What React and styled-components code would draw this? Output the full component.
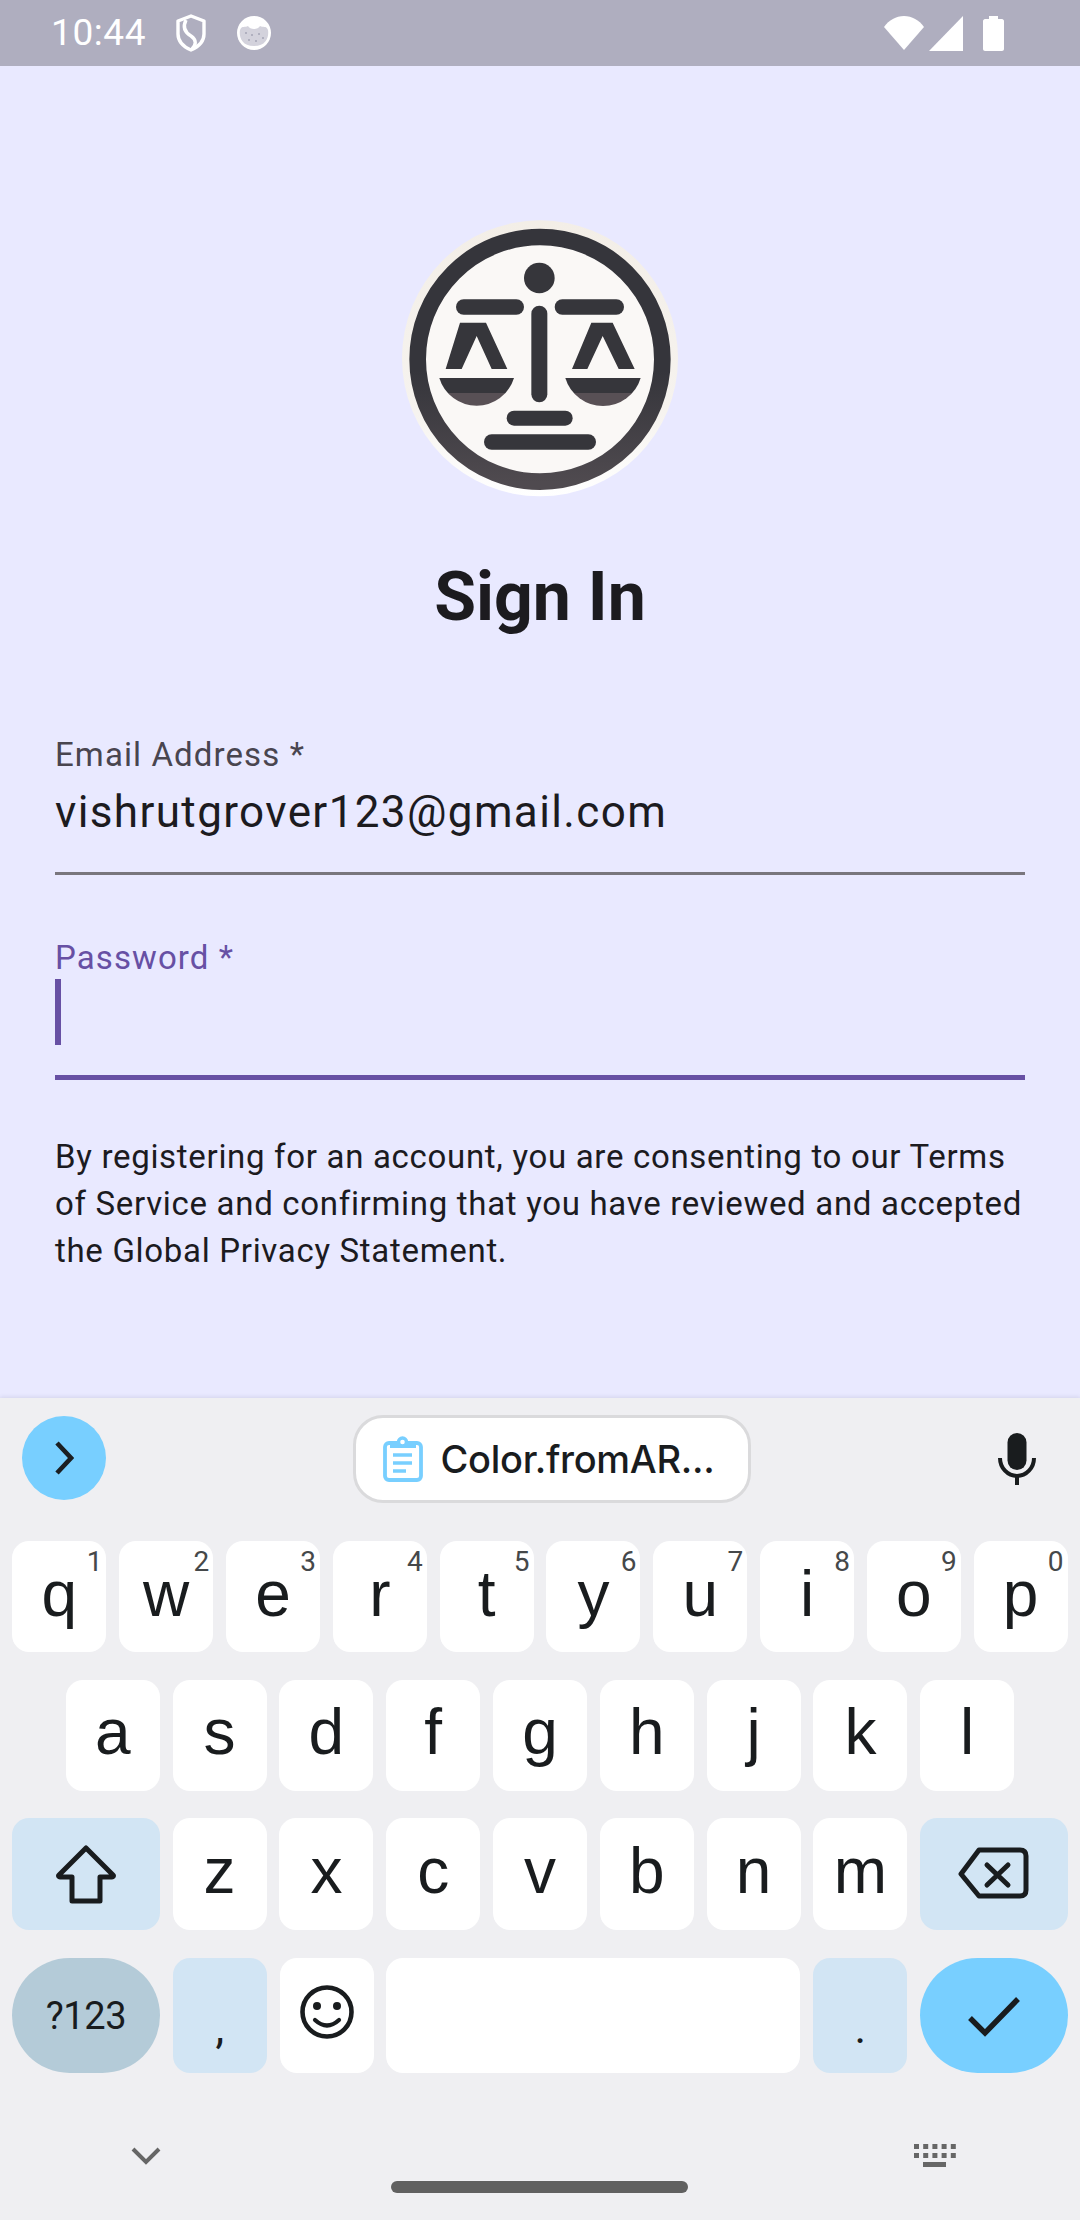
import React from 'react'
import styled, { createGlobalStyle } from 'styled-components'

const GlobalStyle = createGlobalStyle`
  html, body {
    margin: 0;
    padding: 0;
    background: #efeff2;
    font-family: Roboto, "Liberation Sans", sans-serif;
  }
`

const rows = [
  [['q', '1'], ['w', '2'], ['e', '3'], ['r', '4'], ['t', '5'], ['y', '6'], ['u', '7'], ['i', '8'], ['o', '9'], ['p', '0']],
  [['a'], ['s'], ['d'], ['f'], ['g'], ['h'], ['j'], ['k'], ['l']],
]
const lowerRow = ['z', 'x', 'c', 'v', 'b', 'n', 'm']

const Scales = () => (
  <LogoSvg viewBox="60 60 840 840">
    <defs>
      <linearGradient id="ring" x1="0" y1="0" x2="0" y2="1">
        <stop offset="0.55" stopColor="#35353b" />
        <stop offset="1" stopColor="#4f4a4f" />
      </linearGradient>
      <linearGradient id="rim" x1="0" y1="0" x2="0" y2="1">
        <stop offset="0" stopColor="#f3eee7" />
        <stop offset="0.7" stopColor="#f6f3ef" />
        <stop offset="1" stopColor="#ffffff" />
      </linearGradient>
      <linearGradient id="pan" x1="0" y1="0" x2="0" y2="1">
        <stop offset="0.53" stopColor="#36363b" />
        <stop offset="0.53" stopColor="#585055" />
      </linearGradient>
    </defs>
    <circle cx="480" cy="475" r="414" fill="url(#rim)" />
    <circle cx="480" cy="478" r="344" fill="#faf8f6" />
    <circle cx="480" cy="478" r="367" fill="none" stroke="url(#ring)" strokeWidth="50" />
    <g fill="#36363b">
      <circle cx="478" cy="234" r="46" />
      <rect x="228" y="298" width="204" height="46" rx="23" />
      <rect x="524" y="298" width="208" height="46" rx="23" />
      <rect x="454" y="317" width="48" height="290" rx="24" />
      <rect x="380" y="632" width="198" height="45" rx="22" />
      <rect x="312" y="703" width="336" height="46" rx="23" />
      <polygon points="240,368 318,368 382,507 335,507 290,408 245,507 197,507" />
      <polygon points="634,368 698,368 764,507 716,507 668,408 622,507 576,507" />
    </g>
    <path d="M178 534H402A117 117 0 0 1 178 534Z" fill="url(#pan)" />
    <path d="M556 534H782A118 118 0 0 1 556 534Z" fill="url(#pan)" />
  </LogoSvg>
)

const ShieldIcon = () => (
  <svg width="30" height="38" viewBox="0 0 30 38" fill="none" stroke="#fff" strokeWidth="3.4">
    <path d="M15 2L28 7V20C28 28 22 33 15 36C8 33 2 28 2 20V7Z" strokeLinejoin="round" />
    <path d="M10 6C6 14 10 19 15 22C21 26 20 31 16 35" />
  </svg>
)

const DebugIcon = () => (
  <svg width="36" height="34" viewBox="0 0 36 34">
    <circle cx="18" cy="17" r="17" fill="#fff" />
    <path d="M4 14C6 9 9 12 12 10C14 14 22 14 24 10C27 12 30 9 32 14C33 20 31 30 18 30C5 30 3 20 4 14Z" fill="#d3d2dc" />
    <g fill="#a5a4b6">
      <circle cx="10" cy="17" r="1" />
      <circle cx="16" cy="19" r="1" />
      <circle cx="23" cy="18" r="1" />
      <circle cx="27" cy="22" r="1" />
      <circle cx="13" cy="24" r="1" />
      <circle cx="20" cy="25" r="1" />
    </g>
  </svg>
)

const WifiIcon = () => (
  <svg width="40" height="34" viewBox="0 0 40 34">
    <path d="M0 11C5 4 12 0 20 0C28 0 35 4 40 11L20 34Z" fill="#fff" />
  </svg>
)

const SignalIcon = () => (
  <svg width="34" height="35" viewBox="0 0 34 35">
    <path d="M34 0V35H0Z" fill="#fff" />
  </svg>
)

const BatteryIcon = () => (
  <svg width="21" height="35" viewBox="0 0 21 35">
    <path d="M6 0H15V3H19C20 3 21 4 21 5V33C21 34 20 35 19 35H2C1 35 0 34 0 33V5C0 4 1 3 2 3H6Z" fill="#fff" />
  </svg>
)

const ChevronRight = () => (
  <svg width="20" height="34" viewBox="0 0 20 34" fill="none" stroke="#1b1f22" strokeWidth="4.6">
    <path d="M3 2L17 17L3 32" />
  </svg>
)

const ClipboardIcon = () => (
  <svg width="40" height="46" viewBox="0 0 40 46" fill="none" stroke="#78cfff">
    <rect x="2" y="7" width="36" height="37" rx="4" strokeWidth="3.8" />
    <path d="M8 7H32V11H8Z" fill="#78cfff" strokeWidth="2" />
    <circle cx="19.5" cy="6" r="4" fill="#fff" strokeWidth="3.4" />
    <path d="M10 19H29M10 27H29M10 35H23" strokeWidth="3.4" />
  </svg>
)

const MicIcon = () => (
  <svg width="40" height="52" viewBox="0 0 40 52" fill="none">
    <rect x="10.5" y="0" width="19" height="37" rx="9.5" fill="#191c1e" />
    <path d="M3 25A17 18 0 0 0 37 25M20 43V52" stroke="#191c1e" strokeWidth="4" />
  </svg>
)

const ShiftIcon = () => (
  <svg width="64" height="60" viewBox="0 0 64 60" fill="none" stroke="#191c1e" strokeWidth="5" strokeLinejoin="round">
    <path d="M32 4L59 31C60 32 59 33 58 33H46V57H18V33H6C5 33 4 32 5 31Z" />
  </svg>
)

const BackspaceIcon = () => (
  <svg width="72" height="58" viewBox="0 0 72 58" fill="none" stroke="#191c1e" strokeWidth="5" strokeLinecap="round" strokeLinejoin="round">
    <path d="M3 29L21 5H62C66 5 68 7 68 11V45C68 49 66 51 62 51H21Z" />
    <path d="M29 20L50 40M50 20L29 40" />
  </svg>
)

const SmileIcon = () => (
  <svg width="56" height="56" viewBox="0 0 56 56" fill="none" stroke="#191c1e">
    <circle cx="28" cy="28" r="24.5" strokeWidth="4.6" />
    <circle cx="18" cy="22" r="4" fill="#191c1e" stroke="none" />
    <circle cx="38" cy="22" r="4" fill="#191c1e" stroke="none" />
    <path d="M16 36Q28 47 40 36" strokeWidth="4.2" strokeLinecap="round" />
  </svg>
)

const CheckIcon = () => (
  <svg width="56" height="44" viewBox="0 0 56 44" fill="none" stroke="#191c1e" strokeWidth="5.4">
    <path d="M4 24L19 39L52 5" />
  </svg>
)

const CollapseIcon = () => (
  <svg width="30" height="18" viewBox="0 0 30 18" fill="none" stroke="#666" strokeWidth="4">
    <path d="M2 2L15 15L28 2" />
  </svg>
)

const KeyboardIcon = () => (
  <svg width="42" height="24" viewBox="0 0 42 24" fill="#666">
    {[0, 9.2, 18.4, 27.6, 36.8].map(x => (
      <g key={x}>
        <rect x={x} y="0" width="5" height="5" />
        <rect x={x} y="9" width="5" height="5" />
      </g>
    ))}
    <rect x="9" y="18" width="23" height="5" />
  </svg>
)

export default function App() {
  return (
    <Screen>
      <GlobalStyle />
      <StatusBar>
        <StatusLeft>
          <Clock>10:44</Clock>
          <ShieldIcon />
          <DebugIcon />
        </StatusLeft>
        <StatusRight>
          <WifiIcon />
          <SignalIcon />
          <BatteryIcon />
        </StatusRight>
      </StatusBar>

      <Main>
        <Scales />
        <Title>Sign In</Title>
        <Field>
          <Label>Email Address *</Label>
          <Value>vishrutgrover123@gmail.com</Value>
        </Field>
        <Field $focused>
          <Label $focused>Password *</Label>
          <Value $focused><Caret /></Value>
        </Field>
        <Notice>
          By registering for an account, you are consenting to our Terms of Service and confirming that you have reviewed and accepted the Global Privacy Statement.
        </Notice>
      </Main>

      <Keyboard>
        <Toolbar>
          <ExpandButton><ChevronRight /></ExpandButton>
          <ClipChip>
            <ClipboardIcon />
            <ClipText>Color.fromAR...</ClipText>
          </ClipChip>
          <MicIcon />
        </Toolbar>

        <KeyRows>
          {rows.map((row, i) => (
            <KeyRow key={i} $height={111}>
              {row.map(([letter, hint]) => (
                <Key key={letter}>
                  {letter}
                  {hint && <Hint>{hint}</Hint>}
                </Key>
              ))}
            </KeyRow>
          ))}
          <KeyRow $height={112}>
            <WideKey $mod><ShiftIcon /></WideKey>
            {lowerRow.map(letter => <Key key={letter}>{letter}</Key>)}
            <WideKey $mod><BackspaceIcon /></WideKey>
          </KeyRow>
          <KeyRow $height={115}>
            <PillKey $bg="#b4cbd8">?123</PillKey>
            <PunctKey>,</PunctKey>
            <Key><SmileIcon /></Key>
            <SpaceKey />
            <PunctKey>.</PunctKey>
            <PillKey $bg="#78cfff"><CheckIcon /></PillKey>
          </KeyRow>
        </KeyRows>

        <NavBar>
          <CollapseIcon />
          <KeyboardIcon />
        </NavBar>
        <HomeHandle />
      </Keyboard>
    </Screen>
  )
}

const Screen = styled.div`
  position: relative;
  width: 1080px;
  height: 2220px;
  display: flex;
  flex-direction: column;
  overflow: hidden;
`

const StatusBar = styled.div`
  height: 66px;
  flex: none;
  background: #afaebf;
  display: flex;
  align-items: center;
  justify-content: space-between;
  padding: 0 76px 0 51px;
`

const StatusLeft = styled.div`
  display: flex;
  align-items: center;
  gap: 30px;
`

const StatusRight = styled.div`
  display: flex;
  align-items: center;
  gap: 5px;

  svg:last-child {
    margin-left: 15px;
  }
`

const Clock = styled.span`
  font-size: 37px;
  color: #fff;
  line-height: 40px;
  letter-spacing: 0.6px;
`

const Main = styled.main`
  flex: 1;
  background: #e9e9ff;
  padding: 0 55px;
  display: flex;
  flex-direction: column;
  color: #1c1b1f;
`

const LogoSvg = styled.svg`
  width: 280px;
  height: 280px;
  flex: none;
  margin: 154px auto 0;
`

const Title = styled.h1`
  margin: 57px 0 98px;
  font-size: 68px;
  line-height: 80px;
  font-weight: 700;
  text-align: center;
`

const Field = styled.div`
  border-bottom: ${p => (p.$focused ? '5.5px solid #6750a4' : '3px solid #79767d')};
  padding-bottom: ${p => (p.$focused ? '30px' : '32px')};
  margin-bottom: ${p => (p.$focused ? '54px' : '63px')};
`

const Label = styled.div`
  font-size: 33px;
  line-height: 40px;
  letter-spacing: 1.1px;
  color: ${p => (p.$focused ? '#6750a4' : '#49454f')};
`

const Value = styled.div`
  font-size: 44px;
  line-height: 56px;
  height: ${p => (p.$focused ? '66px' : '56px')};
  margin-top: ${p => (p.$focused ? '1px' : '9px')};
  letter-spacing: 1.375px;
`

const Caret = styled.div`
  width: 5.5px;
  height: 66px;
  background: #6750a4;
`

const Notice = styled.p`
  margin: 0;
  font-size: 33px;
  line-height: 46.75px;
  letter-spacing: 0.69px;
`

const Keyboard = styled.div`
  position: relative;
  height: 822px;
  flex: none;
  background: #efeff2;
  box-shadow: 0 -1px 4px rgba(60, 60, 90, 0.12);
`

const Toolbar = styled.div`
  height: 143px;
  box-sizing: border-box;
  padding: 17px 43px 38px 22px;
  display: flex;
  align-items: center;
  justify-content: space-between;
`

const ExpandButton = styled.div`
  width: 84px;
  height: 84px;
  border-radius: 50%;
  background: #78cfff;
  display: flex;
  align-items: center;
  justify-content: center;
  align-self: flex-start;
  margin-top: 1px;
`

const ClipChip = styled.div`
  width: 398px;
  height: 88px;
  box-sizing: border-box;
  border: 3px solid #dadadc;
  border-radius: 30px;
  background: #fff;
  padding-left: 27px;
  display: flex;
  align-items: center;
  gap: 18px;
`

const ClipText = styled.span`
  font-family: Inter, Roboto, sans-serif;
  font-size: 38px;
  font-weight: 500;
  letter-spacing: -0.3px;
  color: #191c1e;
  white-space: nowrap;
`

const KeyRows = styled.div`
  display: flex;
  flex-direction: column;
  gap: 27.5px;
`

const KeyRow = styled.div`
  height: ${p => p.$height}px;
  display: flex;
  justify-content: center;
  gap: 12.8px;
`

const Key = styled.div`
  position: relative;
  width: 94px;
  flex: none;
  box-sizing: border-box;
  border-radius: 17px;
  background: #fff;
  color: #191c1e;
  font-family: "Liberation Sans", Roboto, sans-serif;
  font-size: 64px;
  display: flex;
  align-items: center;
  justify-content: center;
  padding-bottom: 6px;
`

const Hint = styled.span`
  position: absolute;
  top: 5px;
  right: 4px;
  font-family: Roboto, sans-serif;
  font-size: 28px;
  line-height: 32px;
  color: #45484a;
`

const WideKey = styled(Key)`
  width: 148px;
  background: ${p => (p.$mod ? '#d2e5f4' : '#fff')};
  padding-bottom: 0;
`

const PillKey = styled(WideKey)`
  background: ${p => p.$bg};
  border-radius: 58px;
  font-family: Roboto, sans-serif;
  font-size: 38px;
  letter-spacing: -0.4px;
  padding-top: 2px;
`

const PunctKey = styled(Key)`
  background: #d2e5f4;
  font-family: Roboto, sans-serif;
  font-size: 44px;
  align-items: flex-end;
  padding-bottom: 19px;
`

const SpaceKey = styled(Key)`
  width: 414px;
`

const NavBar = styled.div`
  display: flex;
  justify-content: space-between;
  align-items: center;
  padding: 71px 124px 0 131px;
`

const HomeHandle = styled.div`
  position: absolute;
  left: 391px;
  bottom: 27px;
  width: 297px;
  height: 12px;
  border-radius: 6px;
  background: #606060;
`
